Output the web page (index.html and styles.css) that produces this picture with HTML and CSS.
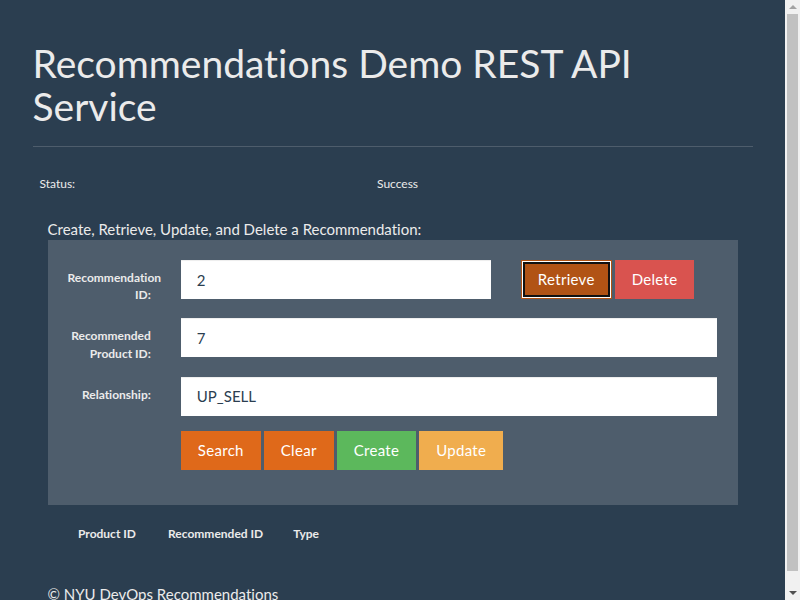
FILE: index.html
```html
<!DOCTYPE html>
<html lang="en">
<head>
<meta charset="utf-8">
<title>Recommendations Demo REST API Service</title>
<link rel="stylesheet" href="styles.css">
</head>
<body>
<div class="container">
  <div class="page-header">
    <h1>Recommendations Demo REST API Service</h1>
  </div>

  <div class="status">
    <span class="status-label">Status:</span>
    <span class="status-msg">Success</span>
  </div>

  <div class="form-title">Create, Retrieve, Update, and Delete a Recommendation:</div>
  <div class="well">
    <div class="form-row">
      <label class="col-label" for="rec_id">Recommendation ID:</label>
      <div class="col-6"><input id="rec_id" class="form-control" type="text" value="2"></div>
      <div class="col-4 btn-group">
        <button class="btn btn-primary btn-focus" type="button">Retrieve</button>
        <button class="btn btn-danger" type="button">Delete</button>
      </div>
    </div>
    <div class="form-row">
      <label class="col-label" for="prod_id">Recommended Product ID:</label>
      <div class="col-10"><input id="prod_id" class="form-control" type="text" value="7"></div>
    </div>
    <div class="form-row">
      <label class="col-label" for="rel">Relationship:</label>
      <div class="col-10"><input id="rel" class="form-control" type="text" value="UP_SELL"></div>
    </div>
    <div class="form-row">
      <div class="col-offset btn-group">
        <button class="btn btn-primary" type="button">Search</button>
        <button class="btn btn-primary" type="button">Clear</button>
        <button class="btn btn-success" type="button">Create</button>
        <button class="btn btn-warning" type="button">Update</button>
      </div>
    </div>
  </div>

  <table class="results">
    <thead>
      <tr><th class="th-prod">Product ID</th><th class="th-rec">Recommended ID</th><th>Type</th></tr>
    </thead>
  </table>

  <footer class="footer">
    <p>&copy; NYU DevOps Recommendations</p>
  </footer>
</div>

<div class="scrollbar" aria-hidden="true">
  <span class="sb-arrow sb-up"></span>
  <span class="sb-thumb"></span>
  <span class="sb-arrow sb-down"></span>
</div>
</body>
</html>
```

FILE: styles.css
```css
html, body {
  margin: 0;
  padding: 0;
}
body {
  background: #2b3e50;
  color: #ebebeb;
  font-family: Lato, "Open Sans", sans-serif;
  font-size: 15px;
  line-height: 1.42857;
  font-variant-ligatures: no-common-ligatures;
  padding-right: 15px;
}
* {
  box-sizing: border-box;
}
.container {
  width: 750px;
  margin: 0 auto;
  padding: 0 15px;
}
.page-header {
  margin-top: 42px;
  padding-bottom: 18px;
  border-bottom: 1px solid #4e5d6c;
}
.page-header h1 {
  margin: 0;
  font-size: 39px;
  font-weight: 400;
  line-height: 1.1;
}
.status {
  display: flex;
  margin-top: 28px;
  padding-left: 7px;
  font-size: 12px;
  line-height: 17px;
}
.status-label {
  width: 337.5px;
}
.form-title {
  margin: 27px 15px 0;
  font-size: 15px;
}
.well {
  margin: 0 15px;
  background: #4e5d6c;
  border: 1px solid transparent;
  padding: 19px;
}
.form-row {
  display: flex;
  margin: 0 -15px 15px;
}
.col-label {
  width: 16.6667%;
  padding: 9px 15px 0;
  text-align: right;
  font-size: 12px;
  font-weight: 700;
  line-height: 1.42857;
}
.col-6 {
  width: 50%;
  padding: 0 15px;
}
.col-4 {
  width: 33.3333%;
  padding: 0 15px;
}
.col-10 {
  width: 83.3333%;
  padding: 0 15px;
}
.col-offset {
  margin-left: 16.6667%;
  padding: 0 15px;
}
.btn-group {
  display: flex;
  gap: 3px;
  align-items: flex-start;
}
.form-control {
  display: block;
  width: 100%;
  height: 39px;
  padding: 8px 16px;
  border: 0;
  border-radius: 0;
  background: #fff;
  color: #2b3e50;
  font-family: Lato, "Open Sans", sans-serif;
  font-size: 15px;
  line-height: 1.42857;
  box-shadow: inset 0 1px 1px rgba(0, 0, 0, 0.075);
  outline: none;
}
.btn {
  display: inline-block;
  height: 39px;
  padding: 8px 16px;
  border: 1px solid transparent;
  border-radius: 0;
  font-family: Lato, "Open Sans", sans-serif;
  font-size: 15px;
  line-height: 21px;
  letter-spacing: 0.3px;
  color: #fff;
  cursor: pointer;
  white-space: nowrap;
}
.btn-primary {
  background: #df691a;
  border-color: #df691a;
}
.btn-focus {
  background: #b15315;
  border-color: #b15315;
  box-shadow: inset 0 0 0 1px #ffffff, inset 0 0 0 3px #111111;
}
.btn-danger {
  background: #d9534f;
  border-color: #d9534f;
}
.btn-success {
  background: #5cb85c;
  border-color: #5cb85c;
}
.btn-warning {
  background: #f0ad4e;
  border-color: #f0ad4e;
}
.results {
  margin: 12px 0 0 30.5px;
  border-collapse: collapse;
  font-size: 12px;
}
.results th {
  padding: 8px 15px;
  text-align: left;
  font-weight: 700;
  line-height: 17px;
  white-space: nowrap;
}
.results .th-prod {
  width: 90px;
}
.results .th-rec {
  width: 125px;
}
.footer {
  margin-top: 34px;
  padding: 0 15px;
}
.footer p {
  margin: 0 0 10.5px;
}

/* simulated browser scrollbar */
.scrollbar {
  position: fixed;
  top: 0;
  right: 0;
  width: 15px;
  height: 100vh;
  background: #f1f1f1;
  display: flex;
  flex-direction: column;
  align-items: center;
}
.sb-arrow {
  display: block;
  width: 0;
  height: 0;
  border-left: 4px solid transparent;
  border-right: 4px solid transparent;
  flex: none;
}
.sb-up {
  margin-top: 5px;
  border-bottom: 4px solid #a3a3a3;
}
.sb-down {
  margin-top: auto;
  margin-bottom: 5px;
  border-top: 4px solid #505050;
}
.sb-thumb {
  display: block;
  width: 11px;
  height: 557px;
  margin-top: 5px;
  background: #c1c1c1;
  flex: none;
}
```
